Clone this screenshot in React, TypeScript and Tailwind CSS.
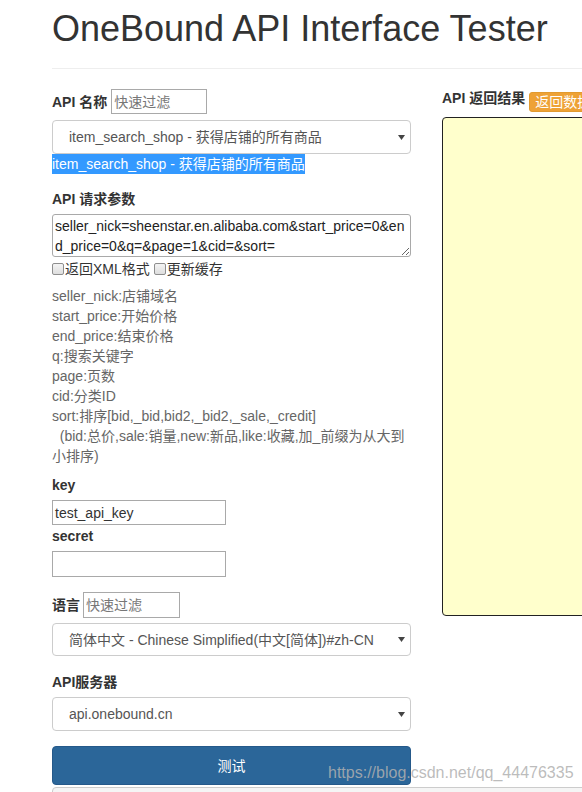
import React from "react";

function Arrow() {
  return (
    <svg width="7" height="5" viewBox="0 0 7 5" className="shrink-0">
      <polygon points="0,0 7,0 3.5,5" fill="#444" />
    </svg>
  );
}

function SelectBox({ text, h }: { text: string; h: string }) {
  return (
    <div
      className={`${h} border border-[#ccc] rounded-[4px] bg-white flex items-center justify-between pl-[16px] pr-[5px] text-[#555]`}
    >
      <span className="leading-[20px] whitespace-nowrap">{text}</span>
      <Arrow />
    </div>
  );
}

function Check({ label }: { label: string }) {
  return (
    <span className="flex items-center">
      <span className="w-[12px] h-[12px] border border-[#8e8e8e] rounded-[2px] bg-gradient-to-b from-[#f4f4f4] to-[#dedede]" />
      <span className="ml-[1px] text-[#333]">{label}</span>
    </span>
  );
}

export default function App() {
  const descLines = [
    "seller_nick:店铺域名",
    "start_price:开始价格",
    "end_price:结束价格",
    "q:搜索关键字",
    "page:页数",
    "cid:分类ID",
    "sort:排序[bid,_bid,bid2,_bid2,_sale,_credit]",
  ];
  return (
    <div className="relative w-[582px] h-[792px] overflow-hidden bg-white text-[14px] leading-[20px] text-[#333] font-['Liberation_Sans','Noto_Sans_CJK_SC',sans-serif]">
      <div className="ml-[52px] w-[770px]">
        <div className="pt-[9px] pb-[19px] border-b border-[#eee]">
          <h1 className="text-[36px] leading-[40px] font-normal text-[#333]">
            OneBound API Interface Tester
          </h1>
        </div>

        <div className="flex items-start gap-[31px] mt-[20px]">
          {/* left column */}
          <div className="w-[359px] shrink-0 flex flex-col">
            <div className="flex items-center gap-[4px] h-[25px]">
              <span className="font-bold">API 名称</span>
              <div className="w-[96px] h-[25px] border border-[#a9a9a9] px-[2px] flex items-center text-[#777]">
                快速过滤
              </div>
            </div>
            <div className="mt-[6px]">
              <SelectBox h="h-[34px]" text="item_search_shop - 获得店铺的所有商品" />
            </div>
            <div className="self-start bg-[#3399ff] text-white leading-[20px]">
              item_search_shop - 获得店铺的所有商品
            </div>

            <div className="mt-[15px] font-bold">API 请求参数</div>
            <textarea
              readOnly
              className="mt-[5px] h-[43px] w-full border border-[#a9a9a9] rounded-[3px] px-[2px] py-[2px] text-[14px] leading-[19.5px] text-[#222] overflow-hidden break-all font-['Liberation_Sans','Noto_Sans_CJK_SC',sans-serif]"
              value="seller_nick=sheenstar.en.alibaba.com&start_price=0&end_price=0&q=&page=1&cid=&sort="
            />
            <div className="mt-[2px] h-[20px] flex items-center gap-[4px]">
              <Check label="返回XML格式" />
              <Check label="更新缓存" />
            </div>

            <div className="mt-[7px] text-[#666] leading-[20px]">
              {descLines.map((l) => (
                <div key={l}>{l}</div>
              ))}
              <div>{"\u00a0\u00a0(bid:总价,sale:销量,new:新品,like:收藏,加_前缀为从大到小排序)"}</div>
            </div>

            <div className="mt-[9px] font-bold">key</div>
            <div className="mt-[5px] w-[174px] h-[25px] border border-[#a9a9a9] px-[2px] flex items-center text-[#333]">
              test_api_key
            </div>
            <div className="mt-[1px] font-bold">secret</div>
            <div className="mt-[5px] w-[174px] h-[26px] border border-[#a9a9a9]" />

            <div className="mt-[15px] flex items-center gap-[3px] h-[26px]">
              <span className="font-bold">语言</span>
              <div className="w-[97px] h-[26px] border border-[#a9a9a9] px-[2px] flex items-center text-[#777]">
                快速过滤
              </div>
            </div>
            <div className="mt-[5px]">
              <SelectBox h="h-[33px]" text="简体中文 - Chinese Simplified(中文[简体])#zh-CN" />
            </div>

            <div className="mt-[16px] font-bold">API服务器</div>
            <div className="mt-[5px]">
              <SelectBox h="h-[34px]" text="api.onebound.cn" />
            </div>

            <button className="mt-[15px] h-[39px] w-full bg-[#2b6699] border border-[#25598a] rounded-[4px] text-white text-[14px] flex items-center justify-center">
              测试
            </button>
          </div>

          {/* right column */}
          <div className="w-[359px] shrink-0 flex flex-col -mt-[1px]">
            <div className="flex items-start gap-[4px]">
              <span className="font-bold leading-[20px]">API 返回结果</span>
              <span className="mt-[4px] h-[20px] px-[5px] bg-[#eea236] border border-[#e29a2f] rounded-[3px] text-white leading-[18px] whitespace-nowrap">
                返回数据格式
              </span>
            </div>
            <div className="mt-[5px] h-[499px] bg-[#ffffcc] border border-[#222] rounded-[4px]" />
          </div>
        </div>

        <div className="mt-[2px] h-[30px] bg-[#f5f5f5] border border-[#ccc] rounded-[4px]" />
      </div>

      <div className="absolute left-[328px] top-[764px] text-[16px] leading-[18px] text-[#b0b0b0]/85 whitespace-nowrap font-['Liberation_Sans',sans-serif]">
        https://blog.csdn.net/qq_44476335
      </div>
    </div>
  );
}
